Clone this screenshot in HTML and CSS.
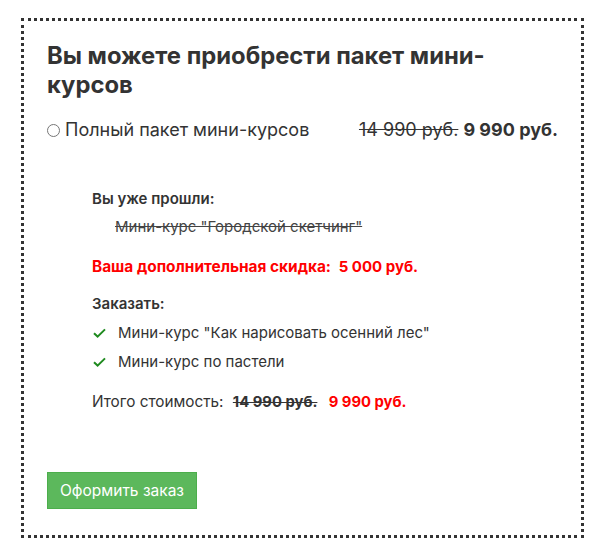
FILE: index.html
```html
<!DOCTYPE html>
<html lang="ru">
<head>
  <meta charset="utf-8">
  <meta name="viewport" content="width=device-width, initial-scale=1.0">
  <title>Пакет мини-курсов</title>
  <link rel="stylesheet" href="styles.css">
</head>
<body>

  <div class="offer">
    <h2 class="offer-title">Вы можете приобрести пакет мини-курсов</h2>

    <!-- Package option -->
    <label class="package">
      <input type="radio" name="package">
      <span class="package-name">Полный пакет мини-курсов</span>
      <span class="package-price"><s>14 990 руб.</s> <b>9 990 руб.</b></span>
    </label>

    <div class="details">
      <p class="details-label">Вы уже прошли:</p>
      <p class="done-course"><s>Мини-курс "Городской скетчинг"</s></p>

      <p class="discount">Ваша дополнительная скидка: <span class="discount-sum">5 000 руб.</span></p>

      <p class="details-label">Заказать:</p>
      <ul class="order-list">
        <li>
          <svg class="check" width="13" height="10" viewBox="0 0 13 10"><path d="M1 5.2 L4.6 8.6 L12 1.4" fill="none" stroke="#1f8a1f" stroke-width="2"/></svg>
          Мини-курс "Как нарисовать осенний лес"
        </li>
        <li>
          <svg class="check" width="13" height="10" viewBox="0 0 13 10"><path d="M1 5.2 L4.6 8.6 L12 1.4" fill="none" stroke="#1f8a1f" stroke-width="2"/></svg>
          Мини-курс по пастели
        </li>
      </ul>

      <p class="total">Итого стоимость: <s class="total-old">14 990 руб.</s> <span class="total-new">9 990 руб.</span></p>
    </div>

    <button class="order-btn">Оформить заказ</button>
  </div>

</body>
</html>
```

FILE: styles.css
```css
* {
  font-family: 'Inter', 'Liberation Sans', sans-serif;
  box-sizing: border-box;
}

body {
  margin: 18px 19px 0 21px;
  color: #333;
}

.offer {
  border: 3px dotted #333;
  padding: 20px 23px 24px 23px;
  height: 520px;
}

.offer-title {
  margin: 0;
  max-width: 490px;
  font-size: 23.8px;
  line-height: 29px;
  font-weight: 700;
  color: #333;
}

.package {
  display: flex;
  align-items: center;
  margin-top: 19px;
  font-size: 18px;
  line-height: 24px;
}

.package input {
  margin: 0 5px 0 0;
  width: 13px;
  height: 13px;
}

.package-name {
  flex: 1;
}

.package-price s {
  font-weight: 400;
}

.package-price b {
  font-weight: 700;
}

.details {
  margin: 47px 0 0 45px;
  font-size: 15px;
  line-height: 20px;
}

.details p {
  margin: 0;
}

.details-label {
  font-weight: 600;
}

.done-course {
  padding-left: 23px;
  margin-top: 8px !important;
  color: #444;
}

.discount {
  margin-top: 20px !important;
  color: #f00;
  font-weight: 700;
  font-size: 15.4px;
}

.discount-sum {
  margin-left: 4px;
  font-size: 15px;
}

.details-label + .order-list {
  margin-top: 4px;
}

.discount + .details-label {
  margin-top: 17px !important;
}

.order-list {
  list-style: none;
  padding: 0;
  margin: 0;
}

.order-list li {
  display: flex;
  align-items: center;
  height: 29px;
  font-size: 15px;
}

.check {
  margin: 0 12px 0 1px;
}

.total {
  margin-top: 16px !important;
  font-size: 15.3px;
}

.total-old {
  font-weight: 700;
  font-size: 14.8px;
  margin-left: 5px;
}

.total-new {
  color: #f00;
  font-weight: 700;
  font-size: 14.8px;
  margin-left: 7px;
}

.order-btn {
  display: block;
  margin-top: 60px;
  background-color: #5cb85c;
  border: 1px solid #4cae4c;
  color: #fff;
  font-size: 15.5px;
  width: 150px;
  height: 37px;
  padding: 0;
  cursor: pointer;
}
```
